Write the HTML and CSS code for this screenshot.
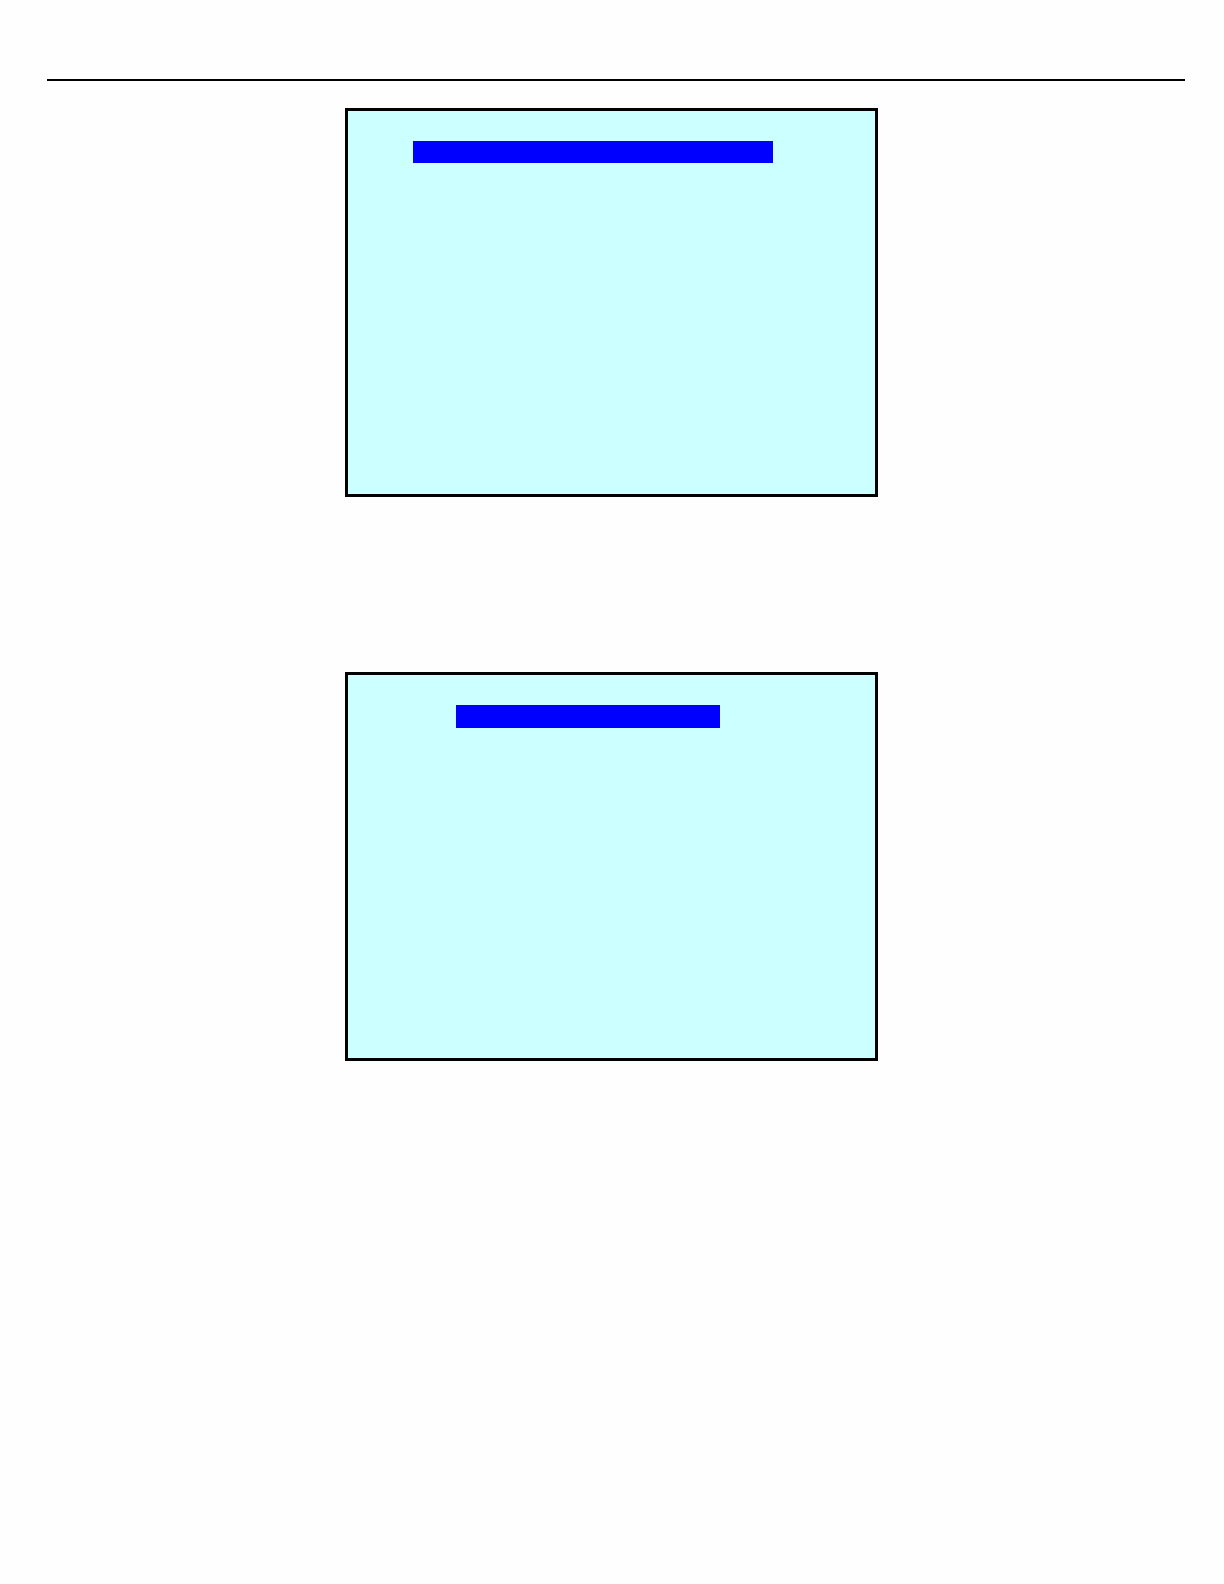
FILE: index.html
```html
<!DOCTYPE html>
<html lang="en">
<head>
  <meta charset="UTF-8">
  <meta name="viewport" content="width=device-width, initial-scale=1.0">
  <title>Screens</title>
  <link rel="stylesheet" href="styles.css">
</head>
<body>
  <header class="page-header">
    <hr class="rule">
  </header>

  <main class="screens">
    <section class="screen">
      <div class="highlight highlight-wide"></div>
    </section>
    <section class="screen">
      <div class="highlight highlight-narrow"></div>
    </section>
  </main>
</body>
</html>
```

FILE: styles.css
```css
* {
  box-sizing: border-box;
}
body {
  margin: 0;
  background-color: #fefefe;
  font-family: "Liberation Sans", Arial, sans-serif;
}
.page-header {
  padding: 79px 39px 0 47px;
}
.rule {
  height: 2px;
  margin: 0;
  border: 0;
  background: #000;
}
.screens {
  display: flex;
  flex-direction: column;
  align-items: center;
  gap: 175px;
  padding: 27px 40px 60px 39px;
}
.screen {
  width: 533px;
  max-width: 100%;
  min-height: 389px;
  padding-top: 30px;
  border: 3px solid #000;
  background: #ccffff;
}

/* selected line on each screen */
.highlight {
  background: #0000ff;
}
.highlight-wide {
  width: 360px;
  max-width: 80%;
  height: 22px;
  margin-left: 65px;
}
.highlight-narrow {
  width: 264px;
  max-width: 60%;
  height: 23px;
  margin-left: 108px;
}
```
